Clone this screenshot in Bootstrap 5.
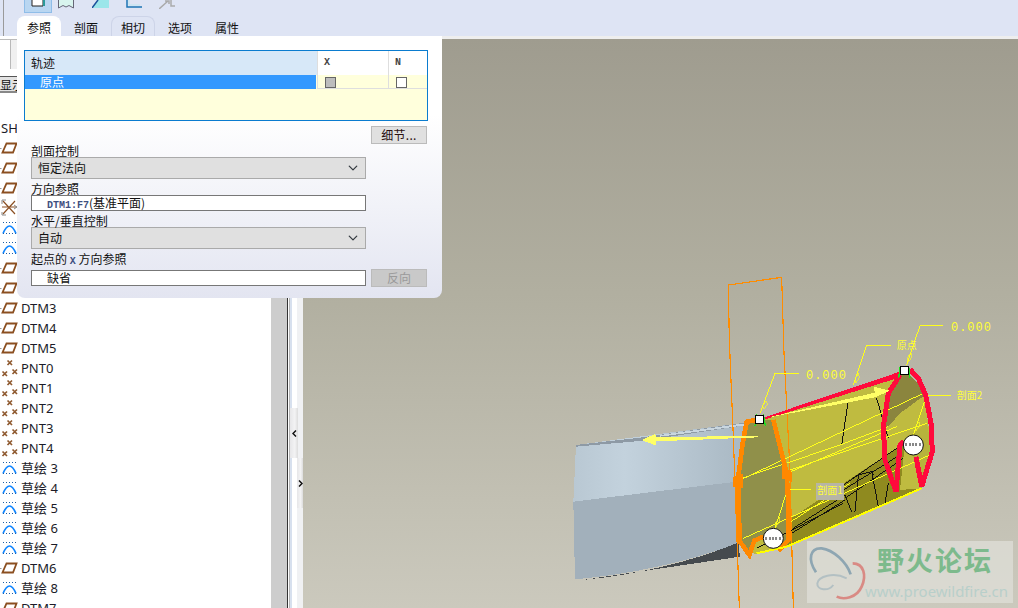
<!DOCTYPE html>
<html lang="zh-CN">
<head>
<meta charset="utf-8">
<title>Pro/E</title>
<link href="https://cdn.jsdelivr.net/npm/bootstrap@5.3.0/dist/css/bootstrap.min.css" rel="stylesheet">
<style>
html,body{height:608px;overflow:hidden;margin:0}
body{width:1018px;position:relative;background:#fff;color:#111;font:12px/12px "Noto Sans CJK SC","Noto Sans",sans-serif}
.app-top{height:36px;background:#dee4f4;position:relative;border:0}
.app-rule{position:absolute;left:3px;top:0;width:1px;height:36px;background:#9a9a9a}
.tool-row{height:16px;padding-left:24px;overflow:hidden}
.tool-on{width:28px;height:13px;background:#b9d6f1;border:1px solid #8fbde8;border-top:0;display:flex;justify-content:center}
.tool-ico{display:block}
.gap-18{margin-left:18px}.gap-17{margin-left:17px}.gap-6{margin-left:6px}
.tab-row{border:0;padding-left:17px;gap:3px;height:20px;flex-wrap:nowrap}
.tab-row .nav-link{width:44px;height:20px;padding:5px 0 0;text-align:center;color:#111;font-size:12px;line-height:12px;border:1px solid transparent;border-bottom:0;border-radius:8px 8px 0 0;background:none;margin:0}
.tab-row .nav-link.active{background:#fff;border-color:#fff;color:#111}
.tab-row .nav-link.tab-soft{border-color:#cdd4e8}
.work{height:572px}
.tree{width:271px;flex:none;background:#fff;overflow:hidden}
.tree-tabs{margin-top:3px;height:30px;background:linear-gradient(90deg,#fff 10px,#b9b9b9 10px,#b9b9b9 11px,#f0f0f0 11px);border-top:1px solid #bbb;width:30px}
.tree-btn{margin-top:7px;height:17px;width:40px;background:#e3e3e3;border-top:1px solid #555;border-bottom:2px solid #888;font-size:12px;line-height:15px;white-space:nowrap}
.tree-list{margin-top:25px}
.node{height:20px;display:flex;align-items:center;font:13px/20px "Noto Sans","Noto Sans CJK SC",sans-serif;color:#1c1c28;white-space:nowrap}
.node svg{flex:none;width:20px;height:20px;margin-right:1px;overflow:visible}
.node-sh{padding-left:1px}
.gutter{width:16px;flex:none;background:#cdcdcd}
.split{width:16px;flex:none;background:linear-gradient(90deg,#333 0 1px,#fff 1px 2px,#b5b5b5 2px 3px,#d7e0ee 3px 5px,#fff 5px 10px,#f0f1f3 10px);padding-top:372px}
.grip{width:8px;height:50px;margin-left:3px;background:linear-gradient(90deg,#e6e6e8,#f3f3f4 60%,#dcdcdc);display:flex;align-items:center;justify-content:center}
.grip-b{margin-left:10px;width:6px}
.scene{flex:1 1 auto;background:linear-gradient(180deg,#eee 0 3px,#9f9c8f 3px,#b1afa0 45%,#cbc9bd 100%);overflow:hidden}
.scene svg{display:block}
.dash{position:absolute;left:17px;top:36px;width:425px;height:262px;background:linear-gradient(180deg,#fff 0,#fff 30%,#e3e5f1 100%);border-radius:0 0 8px 8px;padding:14px 0 0 7px}
.grid-box{width:404px;height:71px;border:1px solid #0b7ccf;background:#ffffdc;display:grid;grid-template-columns:292px 71px 39px;grid-template-rows:24px 14px;align-content:start}
.gh{background:#d7e8f8;padding:6px 0 0 6px;font-size:12px}
.gc{background:#fff;border-left:1px solid #dedede;padding:6px 0 0 6px;font:bold 10px/12px "Liberation Mono",monospace;color:#444}
.gs{background:#3399ff;color:#fff;padding:1px 0 0 15px;margin-right:1px;line-height:12px}
.gk{border-left:1px solid #dedede;border-bottom:1px solid #dedede;padding:2px 0 0 7px}
.tick{display:block;width:11px;height:11px;border:1px solid #666;background:#fff}
.tick-on{background:#bdbdbd}
.more{display:block;margin:5px 0 0 347px;width:56px;height:18px;padding:0;background:#e0e0e0;border:1px solid #bbb;border-radius:0;font-size:12px;line-height:14px;color:#2a1010;letter-spacing:.3px}
.fields{padding:1px 0 0 7px}
.lbl{height:12px;line-height:12px;font-size:12px;white-space:nowrap;position:relative}
.lbl-gap{margin-top:4px}
.mono{font:bold 10px/12px "Liberation Mono",monospace;color:#3f4f80}
.fields .form-select{width:335px;height:22px;padding:0 0 0 6px;background-color:#e0e0e0;border:1px solid #aaa;border-radius:0;font-size:12px;line-height:20px;color:#111;background-size:10px 10px;background-position:right 7px center}
.fields .form-control{width:335px;height:16px;padding:0 0 0 15px;background:#fff;border:1px solid #777;border-radius:0;font-size:12px;line-height:14px;color:#111;min-height:0}
.back{width:56px;height:18px;margin-left:5px;padding:0;background:#c9c9c9;border:1px solid #bbb;border-radius:0;font-size:12px;line-height:14px;color:#9a9a9a}
.back:disabled{background:#c9c9c9;border-color:#bbb;color:#9a9a9a;opacity:1}
.y-num{font:36px "Liberation Mono",monospace;fill:#ffff33;letter-spacing:3px}
.y-cn{font:30px "Noto Sans CJK SC",sans-serif;fill:#ffff33}
.wm-cn{font:bold 27px "Noto Sans CJK SC",serif;fill:#7dba8c;letter-spacing:2px}
.wm-en{font:14px "Noto Sans",sans-serif;fill:#b8cfca}
</style>
</head>
<body>
<svg width="0" height="0" class="position-absolute">
<defs>
<symbol id="i-plane" viewBox="0 0 20 20"><path d="M6.500 5.500H16.500L13 14.500H2.500Z" fill="none" stroke="#8b4f20" stroke-width="1.800"/><path d="M0 10.500H1.500" stroke="#999"/></symbol>
<symbol id="i-pnt" viewBox="0 0 20 20"><path d="M7.500 2.500L12 7M12 2.500L7.500 7M2.500 13.500L7 18M7 13.500L2.500 18M12.500 11.500L17 16M17 11.500L12.500 16" stroke="#8f5a30" stroke-width="1.700" fill="none"/></symbol>
<symbol id="i-sk" viewBox="0 0 20 20"><path d="M3 15.500Q9.500 .5 16 15.500" fill="none" stroke="#0f85ff" stroke-width="1.700"/><path d="M3 4.500H16M3 15.500H16" stroke="#1c5fa8" stroke-width="1.200" stroke-dasharray="1 2" fill="none"/></symbol>
<symbol id="i-ax" viewBox="0 0 20 20"><path d="M3 3L15 16M15 3L3 16M2 9H17" stroke="#8b5024" stroke-width="1.200" fill="none"/><path d="M2 2L6 2M2 2V6M2 17H6M2 17V14M14 7L17 9 14 11" stroke="#888" fill="none"/></symbol>
</defs>
</svg>

<header class="app-top">
  <div class="app-rule"></div>
  <div class="tool-row d-flex align-items-start">
    <div class="tool-on"><svg class="tool-ico" width="15" height="7" viewBox="0 0 15 7"><path d="M1 0V6H12V0" fill="#fff" stroke="#222"/><rect x="12" y="0" width="2" height="6" fill="#2a9a9a"/></svg></div>
    <svg class="tool-ico gap-6" width="16" height="9" viewBox="0 0 16 9"><path d="M.5 0V8L5 5.500 8 7 11 5.500 15.500 8V0" fill="#d8f4ee" stroke="#667"/></svg>
    <svg class="tool-ico gap-18" width="17" height="8" viewBox="0 0 17 8"><path d="M0 8L6 0H17V8Z" fill="#9be6ea"/><path d="M0 8L6 0" stroke="#1a4f9a" stroke-width="1.500"/></svg>
    <svg class="tool-ico gap-17" width="16" height="8" viewBox="0 0 16 8"><path d="M1 0V7H16" fill="none" stroke="#1c74b4" stroke-width="1.500"/><path d="M3 0V5H14" fill="none" stroke="#bfe6f0" stroke-width="1"/></svg>
    <svg class="tool-ico gap-17" width="16" height="9" viewBox="0 0 16 9"><path d="M0 9L9 1M6 1H10V4M12 0V6H16" fill="none" stroke="#aaa" stroke-width="1.500"/></svg>
  </div>
  <ul class="nav nav-tabs tab-row">
    <li class="nav-item"><a class="nav-link active" href="#">参照</a></li>
    <li class="nav-item"><a class="nav-link" href="#">剖面</a></li>
    <li class="nav-item"><a class="nav-link tab-soft" href="#">相切</a></li>
    <li class="nav-item"><a class="nav-link" href="#">选项</a></li>
    <li class="nav-item"><a class="nav-link" href="#">属性</a></li>
  </ul>
</header>

<main class="work d-flex">
  <aside class="tree">
    <div class="tree-tabs"></div>
    <div class="tree-btn">显示</div>
    <div class="tree-list">
      <div class="node"><span class="node-sh">SH</span></div>
      <div class="node"><svg><use href="#i-plane"/></svg></div>
      <div class="node"><svg><use href="#i-plane"/></svg></div>
      <div class="node"><svg><use href="#i-plane"/></svg></div>
      <div class="node"><svg><use href="#i-ax"/></svg></div>
      <div class="node"><svg><use href="#i-sk"/></svg></div>
      <div class="node"><svg><use href="#i-sk"/></svg></div>
      <div class="node"><svg><use href="#i-plane"/></svg></div>
      <div class="node"><svg><use href="#i-plane"/></svg></div>
      <div class="node"><svg><use href="#i-plane"/></svg>DTM3</div>
      <div class="node"><svg><use href="#i-plane"/></svg>DTM4</div>
      <div class="node"><svg><use href="#i-plane"/></svg>DTM5</div>
      <div class="node"><svg><use href="#i-pnt"/></svg>PNT0</div>
      <div class="node"><svg><use href="#i-pnt"/></svg>PNT1</div>
      <div class="node"><svg><use href="#i-pnt"/></svg>PNT2</div>
      <div class="node"><svg><use href="#i-pnt"/></svg>PNT3</div>
      <div class="node"><svg><use href="#i-pnt"/></svg>PNT4</div>
      <div class="node"><svg><use href="#i-sk"/></svg>草绘 3</div>
      <div class="node"><svg><use href="#i-sk"/></svg>草绘 4</div>
      <div class="node"><svg><use href="#i-sk"/></svg>草绘 5</div>
      <div class="node"><svg><use href="#i-sk"/></svg>草绘 6</div>
      <div class="node"><svg><use href="#i-sk"/></svg>草绘 7</div>
      <div class="node"><svg><use href="#i-plane"/></svg>DTM6</div>
      <div class="node"><svg><use href="#i-sk"/></svg>草绘 8</div>
      <div class="node"><svg><use href="#i-plane"/></svg>DTM7</div>
    </div>
  </aside>
  <div class="gutter"></div>
  <div class="split">
    <div class="grip"><svg width="5" height="7" viewBox="0 0 5 7"><path d="M4 .5L1 3.500 4 6.500" fill="none" stroke="#111" stroke-width="1.500"/></svg></div>
    <div class="grip grip-b"><svg width="5" height="7" viewBox="0 0 5 7"><path d="M1 .5L4 3.500 1 6.500" fill="none" stroke="#111" stroke-width="1.500"/></svg></div>
  </div>
  <section class="scene">
    <svg width="715" height="572" viewBox="303 36 715 572">
      <defs>
        <linearGradient id="bl" x1="0" y1="0" x2="1" y2="0"><stop offset="0" stop-color="#b9c8d3"/><stop offset=".3" stop-color="#c3d2dd"/><stop offset="1" stop-color="#a9b8c3"/></linearGradient>
      </defs>
      <g transform="translate(560 270) scale(.33333)" shape-rendering="crispEdges">
        <path d="M48 525L555 458 530 635 40 695Z" fill="url(#bl)"/>
        <path d="M48 525L240 503 555 458 555 466 250 512 48 530Z" fill="#8e9aa5"/>
        <path d="M300 495L555 460 555 466 300 500Z" fill="#c9d6df"/>
        <path d="M40 695L530 635 535 820Q300 905 45 928Z" fill="#a2b0bb"/>
        <path d="M535 818L540 860 68 930Q320 905 535 818Z" fill="#454a4e"/>
        <path d="M610 445L1035 302 1090 370 1118 545 1085 655 680 830 585 852 540 810 680 610Z" fill="#bfbb40"/>
        <path d="M685 750L850 640 1010 535 1035 520 1020 660 1085 655 680 830Z" fill="#8f8a1f"/>
        <path d="M1100 460L1118 545 1085 655 1065 570 1030 515 1060 490Z" fill="#b7b33c"/>
        <path d="M598 448L640 450 680 610 685 810 655 840 610 805 585 810 568 855 540 815 535 620 560 455Z" fill="#90904a"/>
        <path d="M1035 302L1085 350 1095 375 1020 430 985 470 975 470 985 370Z" fill="#8b853e"/>
        <path d="M505 45L665 22 672 250 690 600 700 1014M505 45L508 210 520 500 535 920 538 1014" fill="none" stroke="#ff8c00" stroke-width="3.500"/>
        <g fill="none" stroke="#111" stroke-width="3">
          <path d="M865 390L845 525M950 385L985 505"/>
          <path d="M700 775L855 675M695 790L855 690M590 835L850 700M850 645L1010 535M850 660L1020 555M855 685L1030 565"/>
          <path d="M850 645L895 615 935 605 940 615M895 615L885 725M855 675L875 725M935 605L955 710 975 700 985 640"/>
        </g>
        <g fill="none" stroke="#ffff1a" stroke-width="3">
          <path d="M545 628L1090 370M690 600L1100 460M680 610L1010 470M545 625L840 525 985 470M550 805L1110 555M685 760L870 640"/>
          <path d="M600 430L645 310H718M1040 285L1080 167H1150M880 345L920 226H992M1100 377H1172M1100 377L1060 495M682 660H752M682 660L645 775"/>
          <path d="M608 405L620 392 622 405 610 418ZM1042 262L1054 248 1056 262 1044 276ZM885 325L896 310 898 324 888 338ZM1065 470L1078 456 1078 470 1066 484ZM648 755L660 742 660 756 648 770Z" stroke-width="2"/>
        </g>
        <path d="M598 448L560 455 548 520 535 620 535 700 540 815 568 855 583 812 610 800" fill="none" stroke="#ff8800" stroke-width="14"/>
        <path d="M640 450L660 530 680 610 685 700 685 810 655 842" fill="none" stroke="#ff8800" stroke-width="14"/>
        <path d="M520 620L550 610 550 655 520 650ZM665 585L695 605 695 635 665 625Z" fill="#ff8800"/>
        <path d="M610 443L1020 305 1020 322 610 450Z" fill="#ff0a3c"/>
        <path d="M1050 298L1075 325 1097 375 1113 460 1117 545 1085 650 1068 560" fill="none" stroke="#ff0a3c" stroke-width="15"/>
        <path d="M1020 315L985 370 970 470 975 570 1008 665 1020 525 1032 515" fill="none" stroke="#ff0a3c" stroke-width="15"/>
        <path d="M590 850L680 830 1085 655" fill="none" stroke="#ffff00" stroke-width="6"/>
        <path d="M612 445L945 368 940 350 990 362 945 382 612 445Z" fill="#ffff66"/>
        <path d="M595 497L290 502 285 492 245 510 288 527 288 514 595 502Z" fill="#ffff66"/>
        <path d="M590 432L585 468M610 432L616 468M1020 290L1016 325M1046 290L1050 325" stroke="#22dd22" stroke-width="4" fill="none"/>
        <rect x="586" y="436" width="24" height="24" fill="#fff" stroke="#000" stroke-width="3"/>
        <rect x="1021" y="291" width="24" height="24" fill="#fff" stroke="#000" stroke-width="3"/>
        <g shape-rendering="auto">
          <circle cx="640" cy="805" r="30" fill="#fff" stroke="#111" stroke-width="3"/>
          <circle cx="1060" cy="525" r="30" fill="#fff" stroke="#111" stroke-width="3"/>
        </g>
        <path d="M616 805H664M1036 525H1084" stroke="#888" stroke-width="9" stroke-dasharray="6 4" fill="none"/>
        <rect x="768" y="640" width="84" height="50" fill="#b7b5a5"/>
        <text class="y-num" x="738" y="326">0.000</text>
        <text class="y-num" x="1173" y="182">0.000</text>
        <text class="y-cn" x="1010" y="238">原点</text>
        <text class="y-cn" x="1190" y="388">剖面2</text>
        <text class="y-cn" x="772" y="672">剖面1</text>
      </g>
      <rect x="807" y="541" width="206" height="62" fill="#dfdfd8" fill-opacity=".75"/>
      <g transform="translate(800 535) scale(.33333)" fill="none">
        <path d="M48 112C22 72 30 38 65 40C100 44 140 82 152 118" stroke="#8ea6b2" stroke-width="8"/>
        <path d="M158 85C192 85 200 122 185 155C170 190 130 195 110 185" stroke="#d98a84" stroke-width="8"/>
        <path d="M140 130C100 110 55 125 52 145C50 165 85 170 100 150" stroke="#b3c0c3" stroke-width="6"/>
      </g>
      <text class="wm-cn" x="877" y="571">野火论坛</text>
      <text class="wm-en" x="865" y="597" textLength="143" lengthAdjust="spacingAndGlyphs">www.proewildfire.cn</text>
    </svg>
  </section>
</main>

<div class="dash">
  <div class="grid-box">
    <div class="gh">轨迹</div>
    <div class="gc">X</div>
    <div class="gc">N</div>
    <div class="gs">原点</div>
    <div class="gk"><span class="tick tick-on"></span></div>
    <div class="gk"><span class="tick"></span></div>
  </div>
  <button class="btn more" type="button">细节...</button>
  <form class="fields">
    <div class="lbl">剖面控制</div>
    <select class="form-select"><option>恒定法向</option></select>
    <div class="lbl lbl-gap">方向参照</div>
    <div class="form-control"><span class="mono">DTM1:F7</span>(基准平面)</div>
    <div class="lbl lbl-gap">水平/垂直控制</div>
    <select class="form-select"><option>自动</option></select>
    <div class="lbl lbl-gap mb-1">起点的 <span class="mono">X</span> 方向参照</div>
    <div class="d-flex align-items-center">
      <div class="form-control">缺省</div>
      <button class="btn back" type="button" disabled>反向</button>
    </div>
  </form>
</div>
</body>
</html>
